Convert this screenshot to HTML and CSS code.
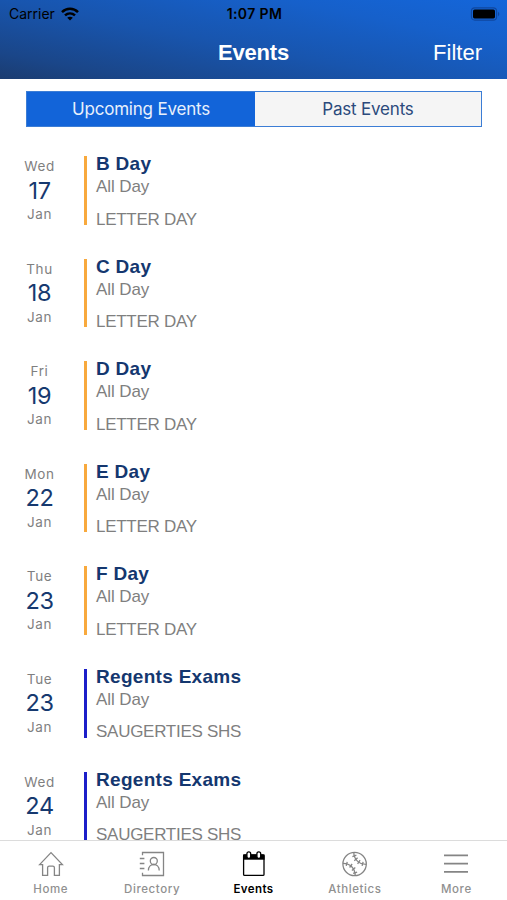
FILE: index.html
```html
<!DOCTYPE html>
<html lang="en">
<head>
  <meta charset="UTF-8">
  <meta name="viewport" content="width=device-width, initial-scale=1">
  <title>Events</title>
  <link rel="stylesheet" href="styles.css">
</head>
<body>

  <header class="header">
    <div class="status">
      <div class="carrier">
        <span>Carrier</span>
        <svg width="18" height="14" viewBox="0 0 18 14" fill="none" stroke="#000" stroke-width="2.5">
          <path d="M1 5.2C5.5 .7 12.5 .7 17 5.2M4 8.4c2.9-2.7 7.1-2.7 10 0"/>
          <path d="M9 13.5L6.2 10.7c1.6-1.4 4-1.4 5.6 0z" fill="#000" stroke="none"/>
        </svg>
      </div>
      <div class="time">1:07 PM</div>
      <div class="battery">
        <svg width="30" height="14" viewBox="0 0 30 14">
          <rect x="1.4" y=".9" width="25.2" height="12.2" rx="3.4" fill="none" stroke="#0f479f" stroke-width="1.1"/>
          <rect x="3" y="2.6" width="22" height="8.8" rx="1.6"/>
          <path d="M28 4.8c1.8.8 1.8 3.6 0 4.4z" fill="#0f479f"/>
        </svg>
      </div>
    </div>
    <div class="navbar">
      <h1>Events</h1>
      <a class="filter">Filter</a>
    </div>
  </header>

  <!-- Tabs -->
  <div class="tabs">
    <div class="tab active">Upcoming Events</div>
    <div class="tab">Past Events</div>
  </div>

  <!-- Event list -->
  <main class="events">
    <div class="event">
      <div class="date"><span>Wed</span><b>17</b><span>Jan</span></div>
      <div class="info"><h2>B Day</h2><p>All Day</p><p class="place">LETTER DAY</p></div>
    </div>
    <div class="event">
      <div class="date"><span>Thu</span><b>18</b><span>Jan</span></div>
      <div class="info"><h2>C Day</h2><p>All Day</p><p class="place">LETTER DAY</p></div>
    </div>
    <div class="event">
      <div class="date"><span>Fri</span><b>19</b><span>Jan</span></div>
      <div class="info"><h2>D Day</h2><p>All Day</p><p class="place">LETTER DAY</p></div>
    </div>
    <div class="event">
      <div class="date"><span>Mon</span><b>22</b><span>Jan</span></div>
      <div class="info"><h2>E Day</h2><p>All Day</p><p class="place">LETTER DAY</p></div>
    </div>
    <div class="event">
      <div class="date"><span>Tue</span><b>23</b><span>Jan</span></div>
      <div class="info"><h2>F Day</h2><p>All Day</p><p class="place">LETTER DAY</p></div>
    </div>
    <div class="event school">
      <div class="date"><span>Tue</span><b>23</b><span>Jan</span></div>
      <div class="info"><h2>Regents Exams</h2><p>All Day</p><p class="place">SAUGERTIES SHS</p></div>
    </div>
    <div class="event school">
      <div class="date"><span>Wed</span><b>24</b><span>Jan</span></div>
      <div class="info"><h2>Regents Exams</h2><p>All Day</p><p class="place">SAUGERTIES SHS</p></div>
    </div>
  </main>

  <!-- Bottom menu -->
  <nav class="menu">
    <a class="item">
      <svg width="26" height="26" viewBox="0 0 26 26">
        <path d="M1.6 13.6L13 1.6l11.4 12h-3V24.4h-5v-7.6q0-1.6-1.6-1.6h-3.6q-1.6 0-1.6 1.6v7.6h-5V13.6z"/>
      </svg>
      <span>Home</span>
    </a>
    <a class="item">
      <svg width="26" height="26" viewBox="0 0 26 26">
        <path d="M3.5 4.2V1.5h21v23h-21v-2.7M.8 7.5h4.6M.8 12.5h4.6M.8 17.5h4.6"/>
        <circle cx="14.8" cy="10" r="3.5"/>
        <path d="M9.4 19.5c0-8 10.8-8 10.8 0"/>
      </svg>
      <span>Directory</span>
    </a>
    <a class="item active">
      <svg width="26" height="26" viewBox="0 0 26 26">
        <rect x="2.6" y="4" width="20.4" height="20.4" rx="1"/>
        <path d="M2 3.5h21.6v5.2H2z" fill="#000" stroke="none"/>
        <rect x="5.9" y=".8" width="3.8" height="6.6" rx="1.9" fill="#fff"/>
        <rect x="15.9" y=".8" width="3.8" height="6.6" rx="1.9" fill="#fff"/>
      </svg>
      <span>Events</span>
    </a>
    <a class="item">
      <svg width="26" height="26" viewBox="0 0 26 26">
        <circle cx="12.6" cy="13" r="11.7"/>
        <path d="M11.8 1.3c.1 7 4.8 11.8 12.4 12M1 12.3c7.2.1 12.1 5 12.2 12.3"/>
        <path d="M10.4 5.6l4-1.4M12.3 9.8l3.3-3M15.6 12.8l2.5-3.6M20.1 14.8l1-4M4.2 14.8l1-4M7.6 16.5l2.5-3.5M9.9 19.4l3.4-2.9M11.1 22.4l4-1.2"/>
      </svg>
      <span>Athletics</span>
    </a>
    <a class="item more">
      <svg width="26" height="26" viewBox="0 0 26 26">
        <path d="M1 4.3h24M1 12.6h24M1 20.9h24"/>
      </svg>
      <span>More</span>
    </a>
  </nav>

</body>
</html>
```
FILE: styles.css
```css
* {
  box-sizing: border-box;
}

body {
  margin: 0;
  height: 900px;
  display: flex;
  flex-direction: column;
  overflow: hidden;
  background: white;
  font-family: "Liberation Sans", Arial, sans-serif;
}

h1, h2, p {
  margin: 0;
}

.header {
  height: 79px;
  flex-shrink: 0;
  background: linear-gradient(191deg, #1466da 0%, #1660ca 25%, #1855ae 55%, #1a4689 85%, #1b3c70 100%);
}

.status {
  display: grid;
  grid-template-columns: 1fr auto 1fr;
  align-items: center;
  height: 27px;
  padding: 0 7px 0 9px;
  font-family: Inter, sans-serif;
  font-size: 14px;
  color: black;
}

.carrier {
  display: flex;
  align-items: center;
  gap: 6px;
}

.time {
  font-weight: 600;
  letter-spacing: 0.4px;
}

.battery {
  display: flex;
  justify-content: flex-end;
}

.navbar {
  display: grid;
  grid-template-columns: 1fr auto 1fr;
  align-items: center;
  height: 51px;
  padding: 0 25px;
  color: white;
}

.navbar h1 {
  grid-column: 2;
  font-size: 22px;
  letter-spacing: -0.2px;
}

.filter {
  justify-self: end;
  font-size: 22px;
}

.tabs {
  display: flex;
  flex-shrink: 0;
  height: 36px;
  margin: 12px 25px 0 26px;
  border: 1px solid #3c7dd5;
  background: #f5f5f5;
  font-family: Inter, sans-serif;
  font-size: 17px;
  letter-spacing: -0.2px;
}

.tab {
  flex: 1;
  line-height: 34px;
  text-align: center;
  color: #2b4a7c;
}

.tab.active {
  flex: 0 0 228px;
  background: #1264d9;
  color: #e8f0fc;
}

.events {
  flex: 1;
  min-height: 0;
  overflow: hidden;
  padding-top: 29px;
}

.event {
  display: flex;
  height: 68.6px;
  margin-bottom: 34px;
}

.date {
  width: 79px;
  margin-right: 5px;
  padding-top: 2px;
  display: flex;
  flex-direction: column;
  align-items: center;
  font-family: Inter, sans-serif;
  font-size: 13.5px;
  line-height: 17.5px;
  letter-spacing: 0.6px;
  color: #7f7f7f;
}

.date b {
  font-size: 23.5px;
  font-weight: 400;
  line-height: 30.5px;
  letter-spacing: -0.4px;
  color: #16396f;
}

.info {
  border-left: 3px solid #f8a93d;
  padding-left: 9px;
  color: #7f7f7f;
}

.school .info {
  border-color: #1c1fc9;
}

.info h2 {
  margin-top: -4px;
  font-size: 19px;
  line-height: 24px;
  letter-spacing: 0.3px;
  color: #14376f;
}

.info p {
  font-size: 17px;
  line-height: 22px;
  letter-spacing: -0.1px;
}

.info .place {
  margin-top: 10.5px;
  letter-spacing: -0.27px;
}

.menu {
  display: flex;
  flex-shrink: 0;
  height: 60px;
  border-top: 1px solid #dcdcdc;
  background: white;
}

.item {
  flex: 1;
  display: flex;
  flex-direction: column;
  align-items: center;
  padding-top: 10px;
  font-family: Inter, sans-serif;
  font-size: 11.5px;
  font-weight: 500;
  line-height: 14px;
  letter-spacing: 0.6px;
  color: #909090;
}

.item span {
  margin-top: 5px;
}

.item svg {
  fill: none;
  stroke: #858585;
  stroke-width: 1.3;
}

.item.active {
  font-weight: 600;
  letter-spacing: 0.4px;
  color: black;
}

.item.active svg {
  stroke: black;
}

.more svg {
  stroke-width: 1.8;
}
```
